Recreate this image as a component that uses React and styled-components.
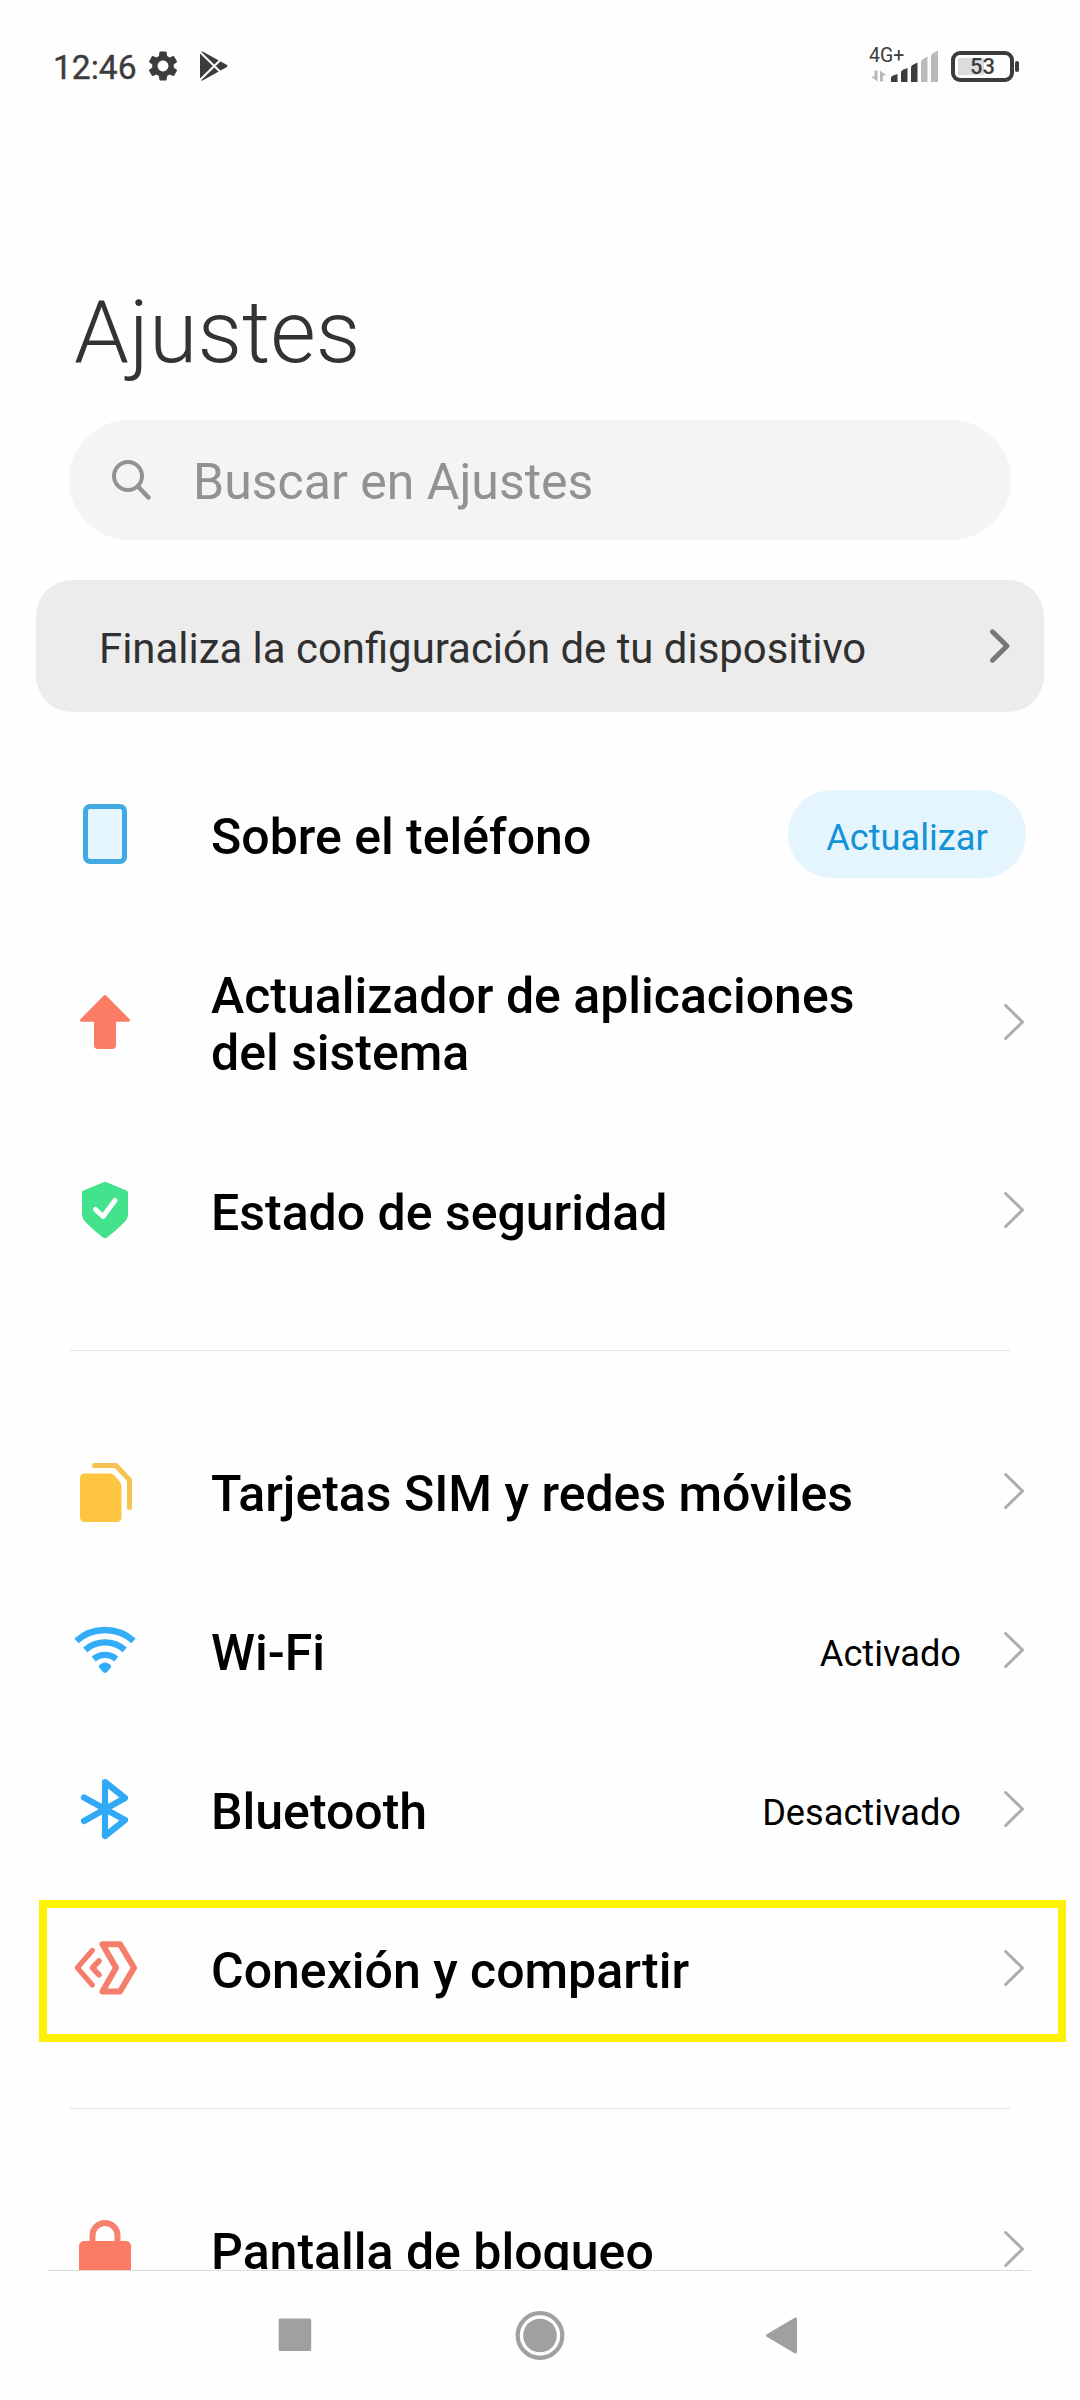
import React from "react";
import styled, { createGlobalStyle } from "styled-components";
import { MdSettings } from "react-icons/md";

const GlobalStyle = createGlobalStyle`
  * { box-sizing: border-box; }
  body {
    margin: 0;
    background: #fefefe;
    font-family: Roboto, "Noto Sans", sans-serif;
    color: #000;
  }
`;

const Screen = styled.div`
  width: 1080px;
  height: 2400px;
  display: flex;
  flex-direction: column;
  overflow: hidden;
  background: #fefefe;
`;

const Content = styled.main`
  height: 2270px;
  flex: none;
  overflow: hidden;
`;

const StatusBar = styled.header`
  height: 132px;
  padding: 0 61px 0 53px;
  display: flex;
  justify-content: space-between;
  align-items: center;
  color: #3c3c3c;
`;

const StatusGroup = styled.div`
  display: flex;
  align-items: center;
`;

const Clock = styled.span`
  width: 92px;
  padding-top: 3px;
  font-size: 33.6px;
  font-weight: 400;
  -webkit-text-stroke: 0.4px currentColor;
  line-height: 40px;
  white-space: nowrap;
`;

const Gear = styled(MdSettings)`
  display: block;
  width: 36px;
  height: 36px;
  margin-right: 18px;
`;

const Network = styled.div`
  width: 68px;
  height: 40px;
  margin-right: 13px;
  display: flex;
  flex-direction: column;
`;

const NetworkLabel = styled.span`
  height: 16px;
  margin-left: -1px;
  font-size: 19.5px;
  line-height: 19px;
`;

const SignalRow = styled.svg`
  display: block;
  width: 68px;
  height: 32px;
  margin-top: -12px;
  flex: none;
`;

const Battery = styled.div`
  width: 63px;
  height: 31px;
  padding: 3px;
  border: 4px solid #3c3c3c;
  border-radius: 9px;
`;

const BatteryLevel = styled.div`
  height: 17px;
  display: flex;
  justify-content: center;
  align-items: center;
  padding-top: 1px;
  background: linear-gradient(90deg, #dcdcdc 53%, transparent 53%);
  font-size: 22px;
  font-weight: 500;
  line-height: 17px;
`;

const BatteryTip = styled.div`
  width: 4px;
  height: 11px;
  margin-left: 1px;
  border-radius: 2px;
  background: #3c3c3c;
`;

const Title = styled.h1`
  margin: 148px 0 0 74px;
  height: 140px;
  font-size: 88px;
  font-weight: 300;
  line-height: 104px;
  color: #333;
`;

const SearchBox = styled.div`
  width: 942px;
  height: 120px;
  margin-left: 69px;
  padding-left: 40px;
  display: flex;
  align-items: center;
  border-radius: 60px;
  background: #f4f4f4;
`;

const SearchIcon = styled.svg`
  width: 44px;
  height: 44px;
  margin-right: 40px;
`;

const SearchHint = styled.span`
  padding-top: 4px;
  font-size: 50px;
  color: #929292;
`;

const Banner = styled.div`
  width: 1008px;
  height: 132px;
  margin: 40px 0 0 36px;
  padding: 0 32px 0 63px;
  display: flex;
  align-items: center;
  justify-content: space-between;
  border-radius: 36px;
  background: #ececec;
`;

const BannerText = styled.span`
  padding-top: 4px;
  font-size: 41.9px;
  color: #303030;
`;

const List = styled.div`
  padding-top: 42.5px;
`;

const Row = styled.div`
  position: relative;
  height: ${(p) => (p.$tall ? 217 : 159)}px;
  padding: 0 54px 0 73px;
  display: flex;
  align-items: center;
`;

const Highlight = styled.div`
  position: absolute;
  left: 39px;
  right: 14px;
  top: 11.5px;
  height: 142px;
  border: 8px solid #fdf106;
`;

const RowIcon = styled.svg`
  width: 64px;
  height: 64px;
  flex: none;
  margin-right: 74px;
`;

const Label = styled.span`
  flex: 1;
  padding-top: 6.5px;
  font-size: 50px;
  font-weight: 500;
  line-height: 57.5px;
  white-space: nowrap;
`;

const Value = styled.span`
  padding-top: 6px;
  margin-right: 43px;
  font-size: 36.2px;
`;

const Pill = styled.button`
  width: 238px;
  height: 88px;
  padding: 6px 0 0;
  border: 0;
  border-radius: 44px;
  background: #e5f5fd;
  color: #1492d8;
  font-family: inherit;
  font-size: 36.2px;
`;

const ChevronSvg = styled.svg`
  display: block;
  flex: none;
`;

const Divider = styled.hr`
  width: 940px;
  height: 1px;
  margin: 60.5px 70px;
  border: 0;
  background: #e4e4e4;
`;

const NavBar = styled.nav`
  height: 130px;
  display: flex;
  flex-direction: column;
`;

const NavLine = styled.div`
  height: 1px;
  margin: 0 49px 0 48px;
  background: #dedede;
`;

const NavButtons = styled.div`
  display: grid;
  grid-template-columns: repeat(3, 50px);
  column-gap: 195px;
  padding: 40px 0 0 270px;
  svg { display: block; }
`;

const RowChevron = () => (
  <ChevronSvg width="22" height="40" viewBox="0 0 22 40" fill="none" stroke="#adadad" strokeWidth="3" strokeLinecap="round" strokeLinejoin="round">
    <path d="M1.6 3.5 L18.5 20 L1.6 36.5" />
  </ChevronSvg>
);

const icons = {
  phone: <rect x="12.5" y="4.5" width="39" height="55" rx="4.5" fill="#e5f6fe" stroke="#42a9e2" strokeWidth="5" />,
  arrow: (
    <path d="M30.6 5.7 Q32 4.3 33.4 5.7 L56.6 29.2 Q58 31.5 55.5 31.8 H43 V55 Q43 59 39 59 H25 Q21 59 21 55 V31.8 H8.5 Q6 31.5 7.4 29.2 Z" fill="#fc7b65" />
  ),
  shield: (
    <>
      <path d="M30.5 4.3 Q32 3.6 33.5 4.3 L54 12.8 Q55 13.4 55 15 V36 Q55 40.5 51.5 44 Q44 52 34 59.5 Q32 60.8 30 59.5 Q20 52 12.5 44 Q9 40.5 9 36 V15 Q9 13.4 10 12.8 Z" fill="#42e38c" />
      <path d="M22.5 31.5 L30 38.5 L42 22.5" fill="none" stroke="#fff" strokeWidth="5" strokeLinecap="round" strokeLinejoin="round" />
    </>
  ),
  sim: (
    <>
      <path d="M12 14.5 H37.5 Q39.5 14.5 41 16 L47 23 Q48.5 24.8 48.5 27 V58 Q48.5 63 43.5 63 H12 Q7 63 7 58 V19.5 Q7 14.5 12 14.5 Z" fill="#fec540" />
      <path d="M21.5 6.5 H43 L56.5 21 V48.5" fill="none" stroke="#f6c350" strokeWidth="5" strokeLinecap="round" strokeLinejoin="round" />
    </>
  ),
  wifi: (
    <>
      <g fill="none" stroke="#33adf8" strokeWidth="6.4">
        <path d="M3.5 22.8 A43 43 0 0 1 60.5 22.8" />
        <path d="M12.2 31.8 A30 30 0 0 1 51.8 31.8" />
        <path d="M20.7 41 A17.5 17.5 0 0 1 43.3 41" />
      </g>
      <path d="M27 46.5 Q32 42.5 37 46.5 Q39 48 37.5 50 L34 54 Q32 55.8 30 54 L26.5 50 Q25 48 27 46.5 Z" fill="#33adf8" />
    </>
  ),
  bluetooth: (
    <path d="M11 20.5 L52 43 L32 59 V5 L52 21 L11 44" fill="none" stroke="#31a9f4" strokeWidth="6.2" strokeLinecap="round" strokeLinejoin="round" />
  ),
  share: (
    <g fill="none" stroke="#f57d6c" strokeLinecap="round" strokeLinejoin="round">
      <path d="M19.3 14.5 L4.3 31.8 L19.3 49" strokeWidth="5.2" />
      <path d="M26 25 L19.5 31.8 L26 38.8" strokeWidth="5.6" />
      <path d="M29.5 8.2 H47 L61 31.8 L47 55.5 H29.5 L43 31.8 Z" strokeWidth="6" />
    </g>
  ),
  lock: (
    <>
      <path d="M19.5 27 V18.5 A12.5 12.5 0 0 1 44.5 18.5 V27" fill="none" stroke="#f5806c" strokeWidth="6" />
      <rect x="6" y="24" width="52" height="40" rx="5" fill="#fc7b65" />
    </>
  ),
};

const groups = [
  [
    { icon: "phone", label: "Sobre el teléfono", action: "Actualizar" },
    { icon: "arrow", label: <>Actualizador de aplicaciones<br />del sistema</>, tall: true },
    { icon: "shield", label: "Estado de seguridad" },
  ],
  [
    { icon: "sim", label: "Tarjetas SIM y redes móviles" },
    { icon: "wifi", label: "Wi-Fi", value: "Activado" },
    { icon: "bluetooth", label: "Bluetooth", value: "Desactivado" },
    { icon: "share", label: "Conexión y compartir", highlighted: true },
  ],
  [{ icon: "lock", label: "Pantalla de bloqueo" }],
];

const SettingsRow = ({ icon, label, value, action, tall, highlighted }) => (
  <Row $tall={tall}>
    <RowIcon viewBox="0 0 64 64">{icons[icon]}</RowIcon>
    <Label>{label}</Label>
    {value && <Value>{value}</Value>}
    {action ? <Pill>{action}</Pill> : <RowChevron />}
    {highlighted && <Highlight />}
  </Row>
);

export default function App() {
  return (
    <Screen>
      <GlobalStyle />
      <Content>
        <StatusBar>
          <StatusGroup>
            <Clock>12:46</Clock>
            <Gear />
            <svg width="30" height="30" viewBox="0 0 30 30">
              <path d="M1 1 Q2 0 4 .8 L28 14 Q29 15 28 16 L4 29.2 Q2 30 1 29 Z" fill="#3c3c3c" />
              <path d="M0 0 L24 23.5 M0 30 L24 6.5" stroke="#fefefe" strokeWidth="2" />
            </svg>
          </StatusGroup>
          <StatusGroup>
            <Network>
              <NetworkLabel>4G+</NetworkLabel>
              <SignalRow viewBox="0 0 68 32">
                <g fill="#3c3c3c">
                  <path d="M21 32 V28 Q21 26 23 25.5 L27.5 24 V32 Z" />
                  <path d="M31 32 V22.5 Q31 21 32.5 20 L37.5 18 V32 Z" />
                  <path d="M41 32 V17.5 Q41 16 42.5 15 L47.5 12.5 V32 Z" />
                </g>
                <g fill="#b9b9b9">
                  <path d="M51 32 V12 Q51 10.5 52.5 9.5 L57.5 6.5 V32 Z" />
                  <path d="M61 32 V6 Q61 4.5 62.5 3.5 L68 .5 V32 Z" />
                  <path d="M4.5 20.500 H7.500 V31.500 L1 26.500 H4.500 Z" />
                  <path d="M10 31.500 V20.500 L16.500 25.500 H13 V31.500 Z" />
                </g>
              </SignalRow>
            </Network>
            <Battery>
              <BatteryLevel>53</BatteryLevel>
            </Battery>
            <BatteryTip />
          </StatusGroup>
        </StatusBar>

        <Title>Ajustes</Title>

        <SearchBox>
          <SearchIcon viewBox="0 0 44 44" fill="none" stroke="#929292" strokeWidth="4" strokeLinecap="round">
            <circle cx="19" cy="18" r="14" />
            <path d="M29 28.5 L39.5 39.5" strokeWidth="4.5" />
          </SearchIcon>
          <SearchHint>Buscar en Ajustes</SearchHint>
        </SearchBox>

        <Banner>
          <BannerText>Finaliza la configuración de tu dispositivo</BannerText>
          <ChevronSvg width="24" height="36" viewBox="0 0 24 36" fill="none" stroke="#777" strokeWidth="5" strokeLinecap="round" strokeLinejoin="round">
            <path d="M4.5 3.8 L19 18 L4.5 32.2" />
          </ChevronSvg>
        </Banner>

        <List>
          {groups.map((rows, g) => (
            <React.Fragment key={g}>
              {g > 0 && <Divider />}
              {rows.map((row) => (
                <SettingsRow key={row.icon} {...row} />
              ))}
            </React.Fragment>
          ))}
        </List>
      </Content>

      <NavBar>
        <NavLine />
        <NavButtons>
          <svg width="50" height="50" viewBox="0 0 50 50">
            <rect x="8.7" y="7.5" width="32.5" height="32.5" rx="1.5" fill="#a0a0a0" />
          </svg>
          <svg width="50" height="50" viewBox="0 0 50 50">
            <circle cx="25" cy="24.5" r="22.3" fill="none" stroke="#a0a0a0" strokeWidth="4.2" />
            <circle cx="25" cy="24.5" r="16.8" fill="#a0a0a0" />
          </svg>
          <svg width="50" height="50" viewBox="0 0 50 50">
            <path d="M7.5 24.5 L35.5 8 V41 Z" fill="#a0a0a0" stroke="#a0a0a0" strokeWidth="3" strokeLinejoin="round" />
          </svg>
        </NavButtons>
      </NavBar>
    </Screen>
  );
}
